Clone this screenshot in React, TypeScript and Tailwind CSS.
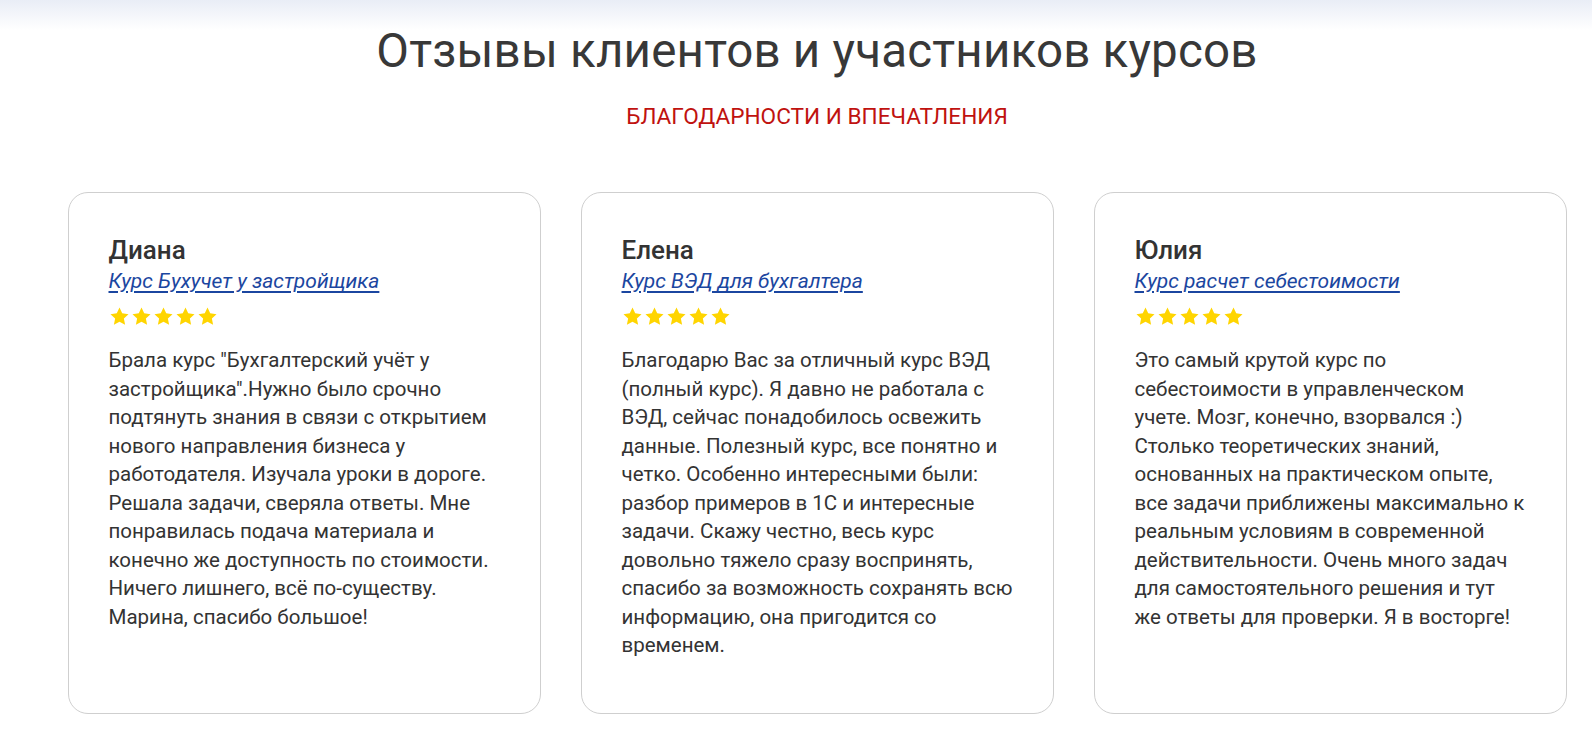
type Review = {
  name: string;
  course: string;
  text: string;
};

const reviews: Review[] = [
  {
    name: "Диана",
    course: "Курс Бухучет у застройщика",
    text: 'Брала курс "Бухгалтерский учёт у застройщика".Нужно было срочно подтянуть знания в связи с открытием нового направления бизнеса у работодателя. Изучала уроки в дороге. Решала задачи, сверяла ответы. Мне понравилась подача материала и конечно же доступность по стоимости. Ничего лишнего, всё по-существу. Марина, спасибо большое!',
  },
  {
    name: "Елена",
    course: "Курс ВЭД для бухгалтера",
    text: "Благодарю Вас за отличный курс ВЭД (полный курс). Я давно не работала с ВЭД, сейчас понадобилось освежить данные. Полезный курс, все понятно и четко. Особенно интересными были: разбор примеров в 1С и интересные задачи. Скажу честно, весь курс довольно тяжело сразу воспринять, спасибо за возможность сохранять всю информацию, она пригодится со временем.",
  },
  {
    name: "Юлия",
    course: "Курс расчет себестоимости",
    text: "Это самый крутой курс по себестоимости в управленческом учете. Мозг, конечно, взорвался :) Столько теоретических знаний, основанных на практическом опыте, все задачи приближены максимально к реальным условиям в современной действительности. Очень много задач для самостоятельного решения и тут же ответы для проверки. Я в восторге!",
  },
];

function Star() {
  return (
    <svg viewBox="0 0 24 24" className="h-[21px] w-[21px]" fill="#ffd500">
      <path d="M12 1.8l3.1 6.6 7.2.9-5.3 5 1.4 7.1L12 17.9l-6.4 3.5 1.4-7.1-5.3-5 7.2-.9z" />
    </svg>
  );
}

function ReviewCard({ review }: { review: Review }) {
  return (
    <div className="h-[522px] rounded-[20px] border border-[#cfcfcf] bg-white px-[40px] pt-[42px]">
      <div className="text-[26px] font-medium leading-[30px] text-[#333333]">{review.name}</div>
      <a
        href="#"
        className="mt-[2px] block text-[21px] italic leading-[28px] text-[#1b46a0] underline decoration-[1.5px] underline-offset-[3px]"
      >
        {review.course}
      </a>
      <div className="mt-[11px] flex gap-[1px]">
        <Star />
        <Star />
        <Star />
        <Star />
        <Star />
      </div>
      <p className="mt-[19px] text-[20.5px] leading-[28.5px] text-[#333333]">{review.text}</p>
    </div>
  );
}

export default function App() {
  return (
    <div className="min-h-screen bg-[linear-gradient(to_bottom,#e9edf6_0px,#ffffff_30px)] pl-[42px] font-['Roboto',sans-serif]">
      <div className="mx-auto w-[1499px]">
        <h2 className="pt-[24px] text-center text-[47.5px] leading-[54px] tracking-[0.2px] text-[#383838]">
          Отзывы клиентов и участников курсов
        </h2>
        <div className="mt-[24px] text-center text-[22.6px] uppercase leading-[30px] text-[#c0120f]">
          Благодарности и впечатления
        </div>
        <div className="mt-[60px] grid grid-cols-3 gap-[40px]">
          {reviews.map((r) => (
            <ReviewCard key={r.name} review={r} />
          ))}
        </div>
      </div>
    </div>
  );
}
